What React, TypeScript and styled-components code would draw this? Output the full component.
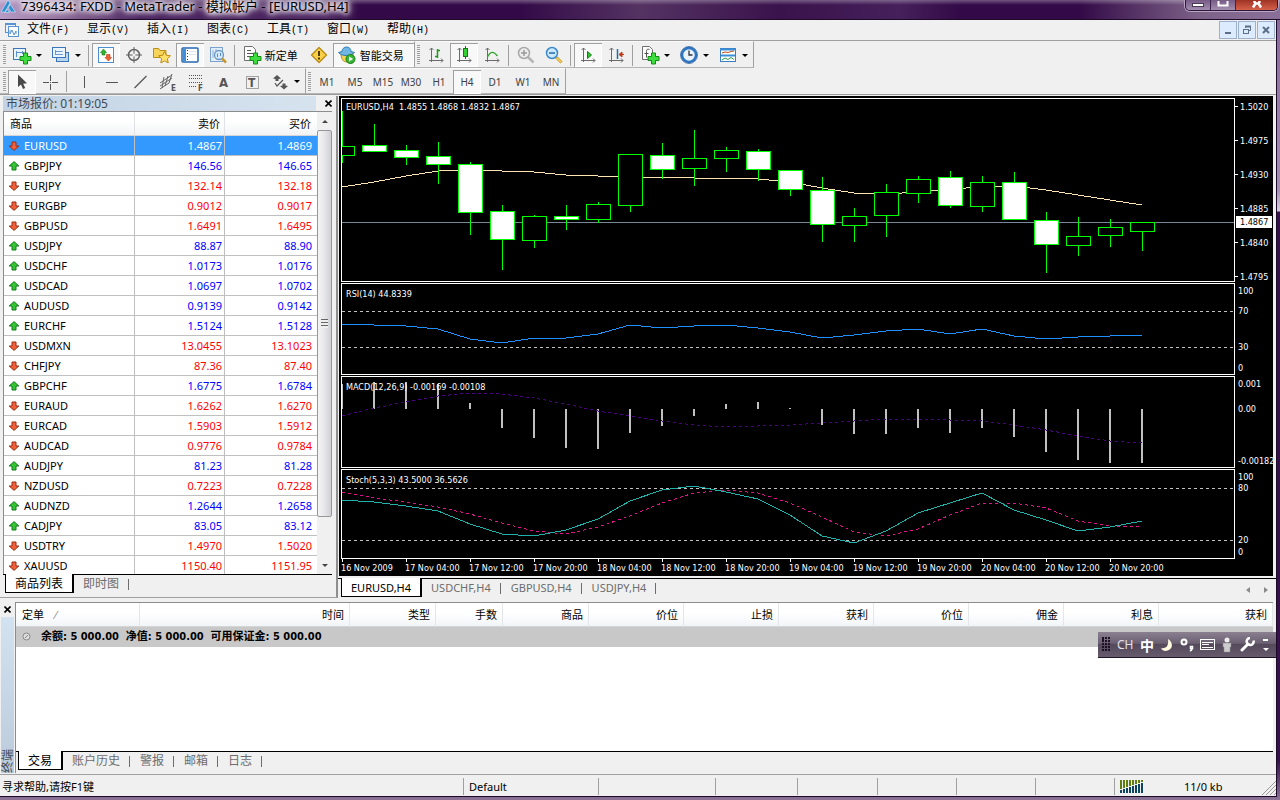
import React from "react";
import styled, { createGlobalStyle, css } from "styled-components";

const ui = '"Noto Sans", "Noto Sans CJK SC", sans-serif';
const condensed = '"DejaVu Sans Condensed", "Noto Sans", "Noto Sans CJK SC", sans-serif';
const mono = '"Liberation Mono", "Noto Sans CJK SC", monospace';

const Global = createGlobalStyle`
  * { box-sizing: border-box; }
  body { margin: 0; background: #35104a; font-family: ${ui}; font-size: 11px; color: #000; }
  button { font: inherit; color: inherit; background: none; border: 0; padding: 0; margin: 0; }
  table { border-collapse: separate; border-spacing: 0; }
`;

/* ---------- window frame ---------- */

const Frame = styled.div`
  display: flex;
  flex-direction: column;
  min-height: 100vh;
  padding: 0 3px 3px 0;
  background: linear-gradient(#85659a 0, #a58fb4 190px, #d8d0de 211px, #35104a 212px, #35104a 760px, #8b7497 100%);
`;

const TitleBar = styled.header`
  display: flex;
  align-items: flex-start;
  height: 20px;
  margin-right: -3px;
  border-bottom: 1px solid #1d0a28;
  background:
    linear-gradient(rgba(255, 255, 255, 0.3), rgba(255, 255, 255, 0) 5px),
    linear-gradient(90deg, #b79cc6 0, #96749f 55px, #4b2560 140px, #4b2560 330px, #330a47 360px, #330a47 520px, #543363 640px, #3a124c 780px, #45205a 900px, #330a47 960px, #330a47 1080px, #7d6288 1200px, #8a6f98 100%);
`;

const TitleIcon = styled.svg`
  flex: none;
  margin: 0 5px 0 1px;
`;

const TitleText = styled.h1`
  flex: 1;
  margin: 0;
  padding-right: 8px;
  font-size: 13px;
  line-height: 13px;
  font-weight: 400;
  white-space: nowrap;
  text-shadow: 0 0 5px #fff, 0 0 6px #fff, 0 0 8px #fff, 0 0 10px #fff, 0 0 4px #e9dff0;
`;

const Caption = styled.div`
  display: flex;
  height: 11px;
  margin-right: 2px;
  border: 1px solid #2b1738;
  border-top: 0;
  border-radius: 0 0 5px 5px;
  overflow: hidden;
  box-shadow: 0 0 0 1px #b9a6c4;
`;

const CaptionButton = styled.button<{ $close?: boolean }>`
  width: ${(p) => (p.$close ? 41 : 25)}px;
  height: 10px;
  overflow: hidden;
  border-right: ${(p) => (p.$close ? "0" : "1px solid #3c2450")};
  background: ${(p) => (p.$close ? "linear-gradient(#9e3325, #d6614a)" : "linear-gradient(#765b84, #a38db0)")};
  svg { display: block; margin: 0 auto; }
`;

const Client = styled.div`
  flex: 1;
  display: flex;
  flex-direction: column;
  border-right: 1px solid #1d0a28;
  border-bottom: 1px solid #1d0a28;
  background: #f0f0f0;
`;

/* ---------- menu ---------- */

const MenuBar = styled.nav`
  display: flex;
  align-items: center;
  height: 21px;
  padding: 0 1px 0 4px;
  border-bottom: 1px solid #a0a0a0;
`;

const MenuItem = styled.button`
  width: 60px;
  text-align: left;
  white-space: nowrap;
  font-size: 12px;
  line-height: 18px;
  &:first-of-type { margin-left: 7px; }
  span { font-family: ${mono}; font-size: 10px; }
`;

const MdiButtons = styled.div`
  display: flex;
  gap: 1px;
  margin-left: auto;
`;

const MdiButton = styled.button`
  width: 18px;
  height: 18px;
  border: 1px solid #9db1cc;
  background: #dcebfd;
  svg { display: block; }
`;

/* ---------- toolbars ---------- */

const ToolRow = styled.div`
  display: flex;
  height: 27px;
  &:last-of-type { border-bottom: 1px solid #9a9a9a; }
`;

const ToolGroup = styled.div`
  display: flex;
  align-items: center;
  padding-top: 1px;
  border-right: 1px solid #a0a0a0;
  border-bottom: 1px solid #b4b4b4;
  border-top: 1px solid #fafafa;
  &:first-child { padding-left: 1px; }
`;

const Grip = styled.span`
  width: 3px;
  height: 20px;
  margin: 0 2px 0 2px;
  background: repeating-linear-gradient(#a0a0a0 0 1px, #f0f0f0 1px 2px);
`;

const Sep = styled.span`
  width: 1px;
  height: 21px;
  margin: 0 3px 0 2px;
  background: #a0a0a0;
`;

const ToolButton = styled.button<{ $w?: number; $on?: boolean }>`
  display: flex;
  align-items: center;
  justify-content: ${(p) => (p.$w ? "flex-start" : "center")};
  width: ${(p) => p.$w ?? 28}px;
  height: 24px;
  padding-left: ${(p) => (p.$w ? 4 : 0)}px;
  font-size: 11px;
  white-space: nowrap;
  svg { flex: none; }
  ${(p) =>
    p.$on &&
    css`
      box-shadow: inset 1px 0 #a0a0a0, inset 0 1px #a0a0a0, inset -1px -1px #fff;
      background: #f8f8f8;
    `}
`;

const Period = styled(ToolButton)`
  font-size: 10px;
  color: #404040;
`;

const Caret = styled.i`
  margin-left: 4px;
  border: 3px solid transparent;
  border-top-color: #000;
  border-bottom: 0;
`;

const Glyph = styled.text<{ $size: number }>`
  font-family: ${condensed};
  font-size: ${(p) => p.$size}px;
  font-weight: 700;
  fill: #555;
`;

const Ico = ({ children }: { children: React.ReactNode }) => (
  <svg width="20" height="20" viewBox="0 0 20 20" fill="none" aria-hidden="true">
    {children}
  </svg>
);

const Plus = () => (
  <path d="M11.500 8h4v3.500h3.500v4h-3.500V19h-4v-3.500H8v-4h3.500z" fill="#3fdc3f" stroke="#128a18" />
);
const Axes = () => (
  <path d="M5.500 3v14M3 15.500h14M3.500 5l2-2 2 2M15 13.500l2 2-2 2" stroke="#6b6b6b" />
);
const ink = "#555";

const icons = {
  newChart: (
    <Ico>
      <rect x="1.500" y="3.500" width="12" height="11" fill="#e9f3fd" stroke="#3d76b8" />
      <path d="M4.500 6v6M4.500 7.500h7M10 6l1.500 1.500L10 9" stroke="#5b8fc9" />
      <Plus />
    </Ico>
  ),
  profiles: (
    <Ico>
      <rect x="5.500" y="7.500" width="12" height="9" fill="#b9d5f0" stroke="#3d76b8" />
      <rect x="1.500" y="2.500" width="13" height="10" fill="#eaf4fd" stroke="#3d76b8" />
      <path d="M4.500 5v5M4.500 6.500h7M4 9.500h8" stroke="#6a9bd0" />
    </Ico>
  ),
  marketWatch: (
    <Ico>
      <rect x="2.500" y="2.500" width="15" height="15" fill="#fff" stroke="#4c8fce" />
      <path d="M7.500 4l3 3.500h-1.500V10H6V7.500H4.500z" fill="#2fb52f" stroke="#16801a" strokeWidth=".6" />
      <path d="M12.500 16l-3.500-3.500h1.500V9.500h3.500v3h1.500z" fill="#ef6230" stroke="#b8350e" strokeWidth=".6" />
    </Ico>
  ),
  dataWindow: (
    <Ico>
      <circle cx="10" cy="10" r="5.500" stroke="#636363" strokeWidth="1.500" />
      <path d="M10 2v16M2 10h16" stroke="#636363" />
      <circle cx="10" cy="10" r="1.500" fill="#f0f0f0" />
    </Ico>
  ),
  navigator: (
    <Ico>
      <path d="M1.500 3.500h5l1.500 2h6v7h-12.500z" fill="#f7d55c" stroke="#b98e18" />
      <path d="M12.500 6.500l1.800 3.800 4.200.5-3.100 2.900.8 4.200-3.700-2.100-3.700 2.100.8-4.200-3.100-2.900 4.200-.5z" fill="#ffe169" stroke="#c08a10" />
    </Ico>
  ),
  terminal: (
    <Ico>
      <rect x="2" y="3" width="16" height="14" rx="1" fill="#fff" stroke="#2568b0" strokeWidth="1.500" />
      <rect x="3" y="4" width="3" height="12" fill="#3f8fe0" />
      <path d="M9 6.500h7M9 9.500h7" stroke="#e0e6ef" />
      <path d="M7.500 5v10" stroke="#333" strokeDasharray="1 2" />
    </Ico>
  ),
  tester: (
    <Ico>
      <rect x="2.500" y="2.500" width="12" height="14" fill="#e4eefa" stroke="#7aa2cd" />
      <path d="M5 5v8M8 4v3" stroke="#8aaed6" />
      <circle cx="11" cy="10" r="4.500" fill="#d2e9fa" fillOpacity=".85" stroke="#6a98c4" strokeWidth="1.300" />
      <path d="M14 13.500l4 4" stroke="#c8962a" strokeWidth="2.500" />
      <path d="M9.500 12V8.500M12.500 11V8" stroke="#5a8abf" />
    </Ico>
  ),
  order: (
    <Ico>
      <path d="M2.500 1.500h8l3 3v11h-11z" fill="#fdfdfd" stroke="#6f6f6f" />
      <path d="M5 5.500h4M5 8.500h6M5 11.500h4" stroke="#555" />
      <Plus />
    </Ico>
  ),
  editor: (
    <Ico>
      <path d="M10 2.500l7.500 7.500-7.500 7.500L2.500 10z" fill="#f8cf45" stroke="#b98b14" strokeLinejoin="round" strokeWidth="1.300" />
      <path d="M10 6v5" stroke="#4d3a05" strokeWidth="2" />
      <path d="M10 12.500v2" stroke="#4d3a05" strokeWidth="2" />
    </Ico>
  ),
  experts: (
    <Ico>
      <path d="M4 8c0 6 2 9 6 9s6-3 6-8z" fill="#f3d25a" stroke="#b58e1d" />
      <path d="M1.500 7.500c3 4 12 4 16 0l-3.500-1c0-3-2-4.500-4.500-4.500S5 4 5 6.500z" fill="#6fb6e4" stroke="#2f7cb3" />
      <circle cx="13.500" cy="14" r="4.500" fill="#36b436" stroke="#168018" />
      <path d="M12 11.500v5l4-2.500z" fill="#fff" />
    </Ico>
  ),
  bars: (
    <Ico>
      <Axes />
      <path d="M11.500 4v9M9 11.500h2.500M11.500 5.500H14" stroke="#1c9a1c" strokeWidth="1.500" />
    </Ico>
  ),
  candles: (
    <Ico>
      <Axes />
      <path d="M11.500 1v13" stroke="#157a15" />
      <rect x="9.500" y="3.500" width="4" height="8" fill="#36d036" stroke="#157a15" />
    </Ico>
  ),
  line: (
    <Ico>
      <Axes />
      <path d="M5.500 12c3-6 6-6 10-1" stroke="#2aa52a" strokeWidth="1.300" />
    </Ico>
  ),
  zoomIn: (
    <Ico>
      <path d="M12 12l5.500 5.500" stroke="#b5b5b5" strokeWidth="2.500" />
      <circle cx="8" cy="8" r="5.500" fill="#ececec" stroke="#a8a8a8" strokeWidth="1.500" />
      <path d="M5 8h6M8 5v6" stroke="#999" strokeWidth="1.500" />
    </Ico>
  ),
  zoomOut: (
    <Ico>
      <path d="M12 12l5.500 5.500" stroke="#c79a2c" strokeWidth="3" />
      <path d="M12.500 12.500l4.500 4.500" stroke="#f6dc6b" strokeWidth="1.200" />
      <circle cx="8" cy="8" r="5.500" fill="#cde8fb" stroke="#3b88c9" strokeWidth="1.500" />
      <path d="M5 8h6" stroke="#1f6bb0" strokeWidth="1.500" />
    </Ico>
  ),
  autoScroll: (
    <Ico>
      <Axes />
      <path d="M9.500 6.500v7l4-3.500z" fill="#2fc22f" stroke="#168018" />
    </Ico>
  ),
  shift: (
    <Ico>
      <Axes />
      <path d="M11.500 4v10" stroke="#1a6fa8" strokeWidth="1.500" />
      <path d="M18 9.500h-4M16 7l-3 2.500 3 2.500z" stroke="#c23a12" fill="#c23a12" />
    </Ico>
  ),
  indicators: (
    <Ico>
      <path d="M2.500 1.500h7l3 3v10h-10z" fill="#fdfdfd" stroke="#6f6f6f" />
      <path d="M9.500 4.500c-2-1-3 0-3 2v6M4.500 8.500h4" stroke="#555" />
      <Plus />
    </Ico>
  ),
  periods: (
    <Ico>
      <circle cx="10" cy="10" r="7" fill="#e8f3fd" stroke="#2c74c4" strokeWidth="2.500" />
      <circle cx="10" cy="10" r="8.500" stroke="#174f92" strokeWidth=".7" />
      <path d="M10 5.500V10h3.500" stroke="#333" strokeWidth="1.300" />
    </Ico>
  ),
  templates: (
    <Ico>
      <rect x="2.500" y="3.500" width="15" height="13" fill="#fff" stroke="#3a7fc4" />
      <path d="M2 4.500h16M3 10.500h14" stroke="#3a8fd8" strokeWidth="2" />
      <path d="M4 8l3-1 3 .5 3-1 3-.5" stroke="#c05018" />
      <path d="M4 15l3-2 3 1.500 3-2 3 2" stroke="#2b9a4a" />
    </Ico>
  ),
  pointer: (
    <Ico>
      <path d="M6 2.500v12.500l3-2.500 2 4.500 2.200-1-2-4.300 3.800-.4z" fill="#4a4a4a" />
    </Ico>
  ),
  cross: (
    <Ico>
      <path d="M10.500 3v6M10.500 12v6M3 10.500h6M12 10.500h6M10 10.500h1" stroke={ink} />
    </Ico>
  ),
  vline: (
    <Ico>
      <path d="M10.500 4v12" stroke={ink} />
    </Ico>
  ),
  hline: (
    <Ico>
      <path d="M4 10.500h12" stroke={ink} />
    </Ico>
  ),
  trend: (
    <Ico>
      <path d="M4.500 16l12-12" stroke={ink} strokeWidth="1.300" />
    </Ico>
  ),
  channel: (
    <Ico>
      <path d="M2 11l12-8M2 14l12-8M2 17l9-6M6 5L4 16M10 4L7 14M14 2l-3 9" stroke="#666" />
      <Glyph $size={8} x="13" y="19">E</Glyph>
    </Ico>
  ),
  fibo: (
    <Ico>
      <path d="M3 3.500h14M3 6.500h14M3 10.500h14M3 14.500h8" stroke="#555" strokeDasharray="1 1" />
      <Glyph $size={8} x="12" y="19">F</Glyph>
    </Ico>
  ),
  text: (
    <Ico>
      <Glyph $size={13} x="5" y="15">A</Glyph>
    </Ico>
  ),
  label: (
    <Ico>
      <rect x="4.500" y="4.500" width="12" height="12" stroke="#555" strokeDasharray="1 1" />
      <Glyph $size={12} x="6" y="15">T</Glyph>
    </Ico>
  ),
  arrows: (
    <Ico>
      <path d="M7 3l4 3.500-2.500.5v2h-3V7L3 6.500z" fill="#555" />
      <path d="M14 17.500l-4-3.500 2.500-.5v-2h3v2l2.500.5z" fill="#555" />
      <path d="M5 11l2 3 6-6" stroke="#555" strokeWidth="1.200" />
    </Ico>
  ),
};

/* ---------- market watch ---------- */

const Workspace = styled.main`
  display: flex;
  margin-top: 1px;
`;

const Watch = styled.section`
  display: flex;
  flex-direction: column;
  flex: none;
  width: 338px;
  padding: 0 4px 4px 3px;
  border-right: 2px solid #8e8e8e;
  border-bottom: 1px solid #a0a0a0;
`;

const PaneTitle = styled.div`
  display: flex;
  gap: 5px;
  height: 15px;
  margin-right: -4px;
  h2 {
    flex: 1;
    margin: 0;
    padding-left: 3px;
    font-size: 12px;
    line-height: 15px;
    font-weight: 400;
    color: #3c4a58;
    background: linear-gradient(90deg, #c3d3e4, #d6e3ef);
  }
`;

const CloseButton = styled.button`
  display: flex;
  align-items: center;
  justify-content: center;
  width: 15px;
  height: 15px;
`;

const CloseMark = () => (
  <svg width="7" height="7" viewBox="0 0 7 7" aria-hidden="true">
    <path d="M0.500 .5l6 6M6.500 .5l-6 6" stroke="#000" strokeWidth="1.600" />
  </svg>
);

const List = styled.div`
  display: flex;
  flex: 1 1 auto;
  height: 0;
  overflow: hidden;
  border-top: 1px solid #8c8c8c;
  border-left: 1px solid #8c8c8c;
`;

const Quotes = styled.table`
  flex: 1;
  table-layout: fixed;
  align-self: flex-start;
  background: #fff;
  font-size: 11px;
  line-height: 18px;
  th {
    height: 24px;
    padding: 0 4px 0 6px;
    font-weight: 400;
    text-align: right;
    background: linear-gradient(#fff 40%, #f1f3f5);
    border-bottom: 1px solid #d5d5d5;
    border-right: 1px solid #e0e3e6;
  }
  th:first-child { text-align: left; }
  thead th:last-child { padding-right: 6px; }
  td, tbody th {
    height: 20px;
    padding: 0 2px;
    text-align: right;
    border-right: 1px solid #c0c0c0;
    border-bottom: 1px solid #c0c0c0;
    background: none;
  }
  td:last-child { padding-right: 5px; }
  td:last-child, th:last-child { border-right: 0; }
  tbody th { text-align: left; padding-left: 4px; }
  tbody th svg { margin-right: 4px; vertical-align: -1px; }
`;

const Quote = styled.tr<{ $up: boolean; $on: boolean }>`
  background: ${(p) => (p.$on ? "#3399ff" : "#fff")};
  td { color: ${(p) => (p.$on ? "#fff" : p.$up ? "#0000ff" : "#ff0000")}; }
  th { color: ${(p) => (p.$on ? "#fff" : "#000")}; }
`;

const ScrollBar = styled.div`
  display: flex;
  flex-direction: column;
  width: 15px;
  background: #f0f0f0;
`;

const ScrollButton = styled.button<{ $down?: boolean }>`
  display: flex;
  align-items: center;
  justify-content: center;
  height: 18px;
  i {
    border: 3px solid transparent;
    ${(p) => (p.$down ? "border-top-color: #444; border-bottom: 0;" : "border-bottom-color: #444; border-top: 0;")}
  }
`;

const Thumb = styled.div`
  display: flex;
  align-items: center;
  justify-content: center;
  flex: 10;
  border: 1px solid #979797;
  border-radius: 2px;
  background: linear-gradient(90deg, #f5f5f5, #e6e6e9 50%, #cfd0d4);
  i { width: 7px; height: 9px; background: repeating-linear-gradient(#666 0 1px, #eee 1px 3px); }
`;

const Track = styled.div`
  flex: 1;
`;

const Arrow = ({ up }: { up: boolean }) => (
  <svg width="12" height="10" viewBox="0 0 12 10" aria-label={up ? "up" : "down"}>
    {up ? (
      <path d="M6 .6l4.800 4.400H8v4H4V5H1.200z" fill="#35c435" stroke="#137a1b" />
    ) : (
      <path d="M6 9.400L1.200 5H4V1h4v4h2.800z" fill="#f0603a" stroke="#9a2b10" />
    )}
  </svg>
);

const quotes: [string, string, string, boolean][] = [
  ["EURUSD", "1.4867", "1.4869", false],
  ["GBPJPY", "146.56", "146.65", true],
  ["EURJPY", "132.14", "132.18", false],
  ["EURGBP", "0.9012", "0.9017", false],
  ["GBPUSD", "1.6491", "1.6495", false],
  ["USDJPY", "88.87", "88.90", true],
  ["USDCHF", "1.0173", "1.0176", true],
  ["USDCAD", "1.0697", "1.0702", true],
  ["AUDUSD", "0.9139", "0.9142", true],
  ["EURCHF", "1.5124", "1.5128", true],
  ["USDMXN", "13.0455", "13.1023", false],
  ["CHFJPY", "87.36", "87.40", false],
  ["GBPCHF", "1.6775", "1.6784", true],
  ["EURAUD", "1.6262", "1.6270", false],
  ["EURCAD", "1.5903", "1.5912", false],
  ["AUDCAD", "0.9776", "0.9784", false],
  ["AUDJPY", "81.23", "81.28", true],
  ["NZDUSD", "0.7223", "0.7228", false],
  ["AUDNZD", "1.2644", "1.2658", true],
  ["CADJPY", "83.05", "83.12", true],
  ["USDTRY", "1.4970", "1.5020", false],
  ["XAUUSD", "1150.40", "1151.95", false],
];

/* ---------- tabs ---------- */

const Tabs = styled.div<{ $small?: boolean }>`
  display: flex;
  align-items: flex-start;
  height: 19px;
  padding-left: ${(p) => (p.$small ? 3 : 2)}px;
  border-top: 1px solid #000;
  font-size: ${(p) => (p.$small ? 11 : 12)}px;
`;

const Tab = styled.button<{ $on?: boolean }>`
  height: 18px;
  margin-top: -1px;
  padding: 0 10px 0 9px;
  line-height: 17px;
  white-space: nowrap;
  color: #6d6d6d;
  border-right: 1px solid transparent;
  ${(p) =>
    p.$on
      ? css`
          height: 19px;
          padding: 0 9px;
          color: #000;
          background: #fff;
          border: 1px solid #000;
          border-top: 0;
          border-right-width: 2px;
        `
      : css`
          background: linear-gradient(#6d6d6d, #6d6d6d) right 5px / 1px 11px no-repeat;
        `}
`;

const TabArrows = styled.div`
  display: flex;
  gap: 4px;
  margin: 0 3px 0 auto;
  button { width: 14px; height: 18px; }
`;

/* ---------- charts ---------- */

const ChartPane = styled.section`
  flex: 1;
  min-width: 0;
  display: flex;
  flex-direction: column;
  padding-bottom: 1px;
`;

const ChartWindow = styled.div`
  display: flex;
  flex-direction: column;
  gap: 1px;
  margin: 0 3px 2px 1px;
  padding: 2px 0 0 2px;
  background: #000;
`;

const Panel = styled.div<{ $h: number }>`
  display: grid;
  grid-template-columns: minmax(0, 1fr) 38px;
  height: ${(p) => p.$h}px;
`;

const Plot = styled.div`
  border: 1px solid #fff;
  overflow: hidden;
`;

const Drawing = styled.svg`
  display: block;
  width: 100%;
  height: 100%;
  shape-rendering: crispEdges;
  text { font-family: ${condensed}; font-size: 9px; fill: #fff; }
  path { fill: none; }
`;

const PriceTag = styled.g`
  rect { fill: #fff; }
  text { fill: #000; }
`;

const TimeAxis = styled.div`
  height: 17px;
  margin-top: -1px;
`;

const STEP = 32;

type Candle = [number, number, number, number, 0 | 1];
/* high, body top, body bottom, low, filled (bearish) */
const candles: Candle[] = [
  [12, 47, 56, 63, 0],
  [25, 46, 52, 52, 1],
  [46, 51, 58, 65, 1],
  [43, 57, 65, 84, 1],
  [63, 65, 113, 135, 1],
  [106, 112, 140, 170, 1],
  [116, 117, 141, 148, 0],
  [106, 117, 120, 130, 1],
  [103, 105, 120, 123, 0],
  [55, 55, 106, 112, 0],
  [44, 56, 70, 79, 1],
  [31, 59, 69, 86, 0],
  [48, 51, 59, 72, 0],
  [50, 52, 70, 81, 1],
  [71, 71, 90, 96, 1],
  [78, 91, 125, 142, 1],
  [109, 117, 126, 142, 0],
  [85, 93, 116, 137, 0],
  [77, 80, 94, 103, 0],
  [72, 78, 106, 108, 1],
  [77, 83, 107, 112, 0],
  [73, 83, 120, 120, 1],
  [113, 121, 145, 173, 1],
  [118, 137, 146, 156, 0],
  [120, 128, 136, 147, 0],
  [123, 123, 132, 151, 0],
];

const average = [88, 83, 77, 72, 71, 72, 73, 76, 77, 78, 78, 79, 79, 80, 83, 89, 94, 95, 93, 90, 88, 87, 91, 96, 101, 106];
const rsi = [40, 41, 42, 45, 55, 59, 54, 54, 50, 41, 44, 42, 41, 44, 48, 54, 51, 47, 45, 50, 45, 52, 55, 53, 52, 51];
const macd = [7, 5, 5, 7, 26, 51, 61, 71, 72, 56, 49, 39, 27, 25, 31, 48, 57, 57, 51, 56, 51, 60, 75, 83, 86, 86];
const macdSignal = [39, 31, 25, 19, 16, 17, 21, 27, 34, 39, 44, 48, 50, 49, 48, 46, 44, 42, 42, 43, 44, 48, 53, 59, 64, 66];
const stoch = [30, 32, 36, 41, 54, 64, 66, 60, 49, 31, 20, 16, 22, 29, 45, 66, 73, 61, 43, 33, 23, 40, 50, 61, 57, 51];
const stochSignal = [22, 28, 32, 37, 44, 53, 61, 64, 57, 46, 33, 23, 20, 23, 33, 47, 62, 66, 59, 45, 33, 33, 38, 51, 56, 57];
const prices: [number, string][] = [
  [8, "1.5020"], [42, "1.4975"], [76, "1.4930"], [110, "1.4885"], [144, "1.4840"], [178, "1.4795"],
];

const toPath = (ys: number[]) => ys.map((y, i) => `${i ? "L" : "M"}${i * STEP} ${y}`).join("");

const Level = ({ y }: { y: number }) => (
  <line x1="0" x2="100%" y1={y + 0.5} y2={y + 0.5} stroke="#c0c0c0" strokeDasharray="3 3" />
);

const Scale = ({ marks }: { marks: [number, string][] }) => (
  <Drawing>
    {marks.map(([y, t]) => (
      <text key={t} x="3" y={y + 3}>{t}</text>
    ))}
  </Drawing>
);

const times = [
  "16 Nov 2009", "17 Nov 04:00", "17 Nov 12:00", "17 Nov 20:00", "18 Nov 04:00", "18 Nov 12:00", "18 Nov 20:00",
  "19 Nov 04:00", "19 Nov 12:00", "19 Nov 20:00", "20 Nov 04:00", "20 Nov 12:00", "20 Nov 20:00",
];

const Charts = () => (
  <ChartWindow>
    <Panel $h={184}>
      <Plot>
        <Drawing>
          <line x1="0" x2="100%" y1="123.500" y2="123.500" stroke="#778899" />
          <path d={toPath(average)} stroke="#ffe4b5" />
          {candles.map(([hi, top, bottom, lo, filled], i) => (
            <g key={i} stroke="#00ff00">
              <line x1={i * STEP + 0.5} x2={i * STEP + 0.5} y1={hi} y2={lo + 1} />
              <rect
                x={i * STEP - 11.5}
                y={top + 0.5}
                width="24"
                height={bottom - top}
                fill={filled ? "#fff" : "#000"}
              />
            </g>
          ))}
          <text x="4" y="11" xmlSpace="preserve">EURUSD,H4  1.4855 1.4868 1.4832 1.4867</text>
        </Drawing>
      </Plot>
      <Drawing>
        {prices.map(([y, t]) => (
          <g key={t}>
            <line x1="0" x2="3" y1={y + 0.5} y2={y + 0.5} stroke="#fff" />
            <text x="5" y={y + 4}>{t}</text>
          </g>
        ))}
        <PriceTag>
          <rect x="1" y="118" width="36" height="12" />
          <text x="5" y="127">1.4867</text>
        </PriceTag>
      </Drawing>
    </Panel>
    <Panel $h={92}>
      <Plot>
        <Drawing>
          <Level y={27} />
          <Level y={63} />
          <path d={toPath(rsi)} stroke="#1e90ff" />
          <text x="4" y="13">RSI(14) 44.8339</text>
        </Drawing>
      </Plot>
      <Scale marks={[[8, "100"], [28, "70"], [64, "30"], [85, "0"]]} />
    </Panel>
    <Panel $h={92}>
      <Plot>
        <Drawing>
          {macd.map((y, i) => (
            <rect key={i} x={i * STEP - 1} y={Math.min(y, 32)} width="2" height={Math.abs(y - 32)} fill="#c0c0c0" />
          ))}
          <path d={toPath(macdSignal)} stroke="#4b0082" strokeDasharray="3 3" />
          <text x="4" y="13">MACD(12,26,9) -0.00169 -0.00108</text>
        </Drawing>
      </Plot>
      <Scale marks={[[8, "0.001"], [33, "0.00"], [85, "-0.00182"]]} />
    </Panel>
    <Panel $h={90}>
      <Plot>
        <Drawing>
          <Level y={18} />
          <Level y={70} />
          <path d={toPath(stochSignal)} stroke="#e0148a" strokeDasharray="3 3" />
          <path d={toPath(stoch)} stroke="#20b2aa" />
          <text x="4" y="13">Stoch(5,3,3) 43.5000 36.5626</text>
        </Drawing>
      </Plot>
      <Scale marks={[[8, "100"], [19, "80"], [71, "20"], [83, "0"]]} />
    </Panel>
    <TimeAxis>
      <Drawing>
        {times.map((t, i) => (
          <g key={t}>
            <line x1={i * 64 + 1.5} x2={i * 64 + 1.5} y1="0" y2="3" stroke="#fff" />
            <text x={i * 64} y="12">{t}</text>
          </g>
        ))}
      </Drawing>
    </TimeAxis>
  </ChartWindow>
);

/* ---------- terminal ---------- */

const Terminal = styled.section`
  position: relative;
  flex: 1;
  display: grid;
  grid-template-columns: 15px minmax(0, 1fr);
  padding: 4px 3px 1px 0;
  border-bottom: 1px solid #a0a0a0;
`;

const Side = styled.div`
  display: flex;
  flex-direction: column;
  h2 {
    flex: 1;
    margin: 0 1px 0 1px;
    font-size: 12px;
    line-height: 13px;
    font-weight: 400;
    color: #3c4a58;
    writing-mode: vertical-rl;
    text-orientation: sideways;
    transform: rotate(180deg);
    background: linear-gradient(#bccbdb, #d3e2f1);
  }
`;

const Trade = styled.div`
  display: flex;
  flex-direction: column;
  min-width: 0;
  padding-bottom: 3px;
  border-left: 1px solid #8c8c8c;
  border-top: 1px solid #8c8c8c;
`;

const Sheet = styled.div`
  flex: 1;
  background: #fff;
`;

const Orders = styled.table`
  width: 100%;
  table-layout: fixed;
  font-size: 11px;
  line-height: 18px;
  th {
    height: 24px;
    padding: 0 5px 0 6px;
    font-weight: 400;
    text-align: right;
    background: linear-gradient(#fff 40%, #f2f5f8);
    border-right: 1px solid #e4e7ea;
    border-bottom: 1px solid #d5d5d5;
  }
  th:first-child { text-align: left; }
  th:first-child span { padding-left: 8px; color: #888; }
  td {
    height: 20px;
    padding: 0 6px;
    font-family: ${condensed};
    font-weight: 700;
    background: #c8c8c8;
    white-space: pre;
  }
  td svg { margin-right: 10px; vertical-align: -1px; }
`;

const LangBar = styled.div`
  position: absolute;
  top: 34px;
  right: 0;
  display: flex;
  align-items: center;
  width: 178px;
  height: 26px;
  padding: 0 7px 0 19px;
  color: #fff;
  border-bottom: 1px solid #1e1526;
  background:
    radial-gradient(circle at 1px 1px, #1c1024 1px, transparent 1px) 4px 6px / 3px 3px no-repeat,
    linear-gradient(#8a8090, #6b6072 45%, #544a5c 50%, #665a6c);
  button { display: flex; align-items: center; justify-content: center; width: 20px; height: 22px; font-size: 14px; }
  button:last-child { width: 7px; margin-left: auto; }
`;

const DragDots = styled.span`
  width: 9px;
  height: 15px;
  margin: 0 6px 0 -15px;
  background: radial-gradient(circle at 1px 1px, #1c1024 1px, transparent 1px) 0 0 / 3px 3px;
`;

const LangName = styled.span`
  width: 20px;
  font-size: 12px;
  color: #e6e0e8;
`;

/* ---------- status ---------- */

const Status = styled.footer`
  display: flex;
  align-items: stretch;
  height: 21px;
  padding: 3px 0 1px;
  line-height: 17px;
`;

const Cell = styled.div<{ $w?: number }>`
  display: flex;
  align-items: center;
  flex: ${(p) => (p.$w ? `${p.$w} 1 ${p.$w}px` : "none")};
  min-width: 0;
  padding-left: 5px;
  white-space: nowrap;
  border-left: 1px solid #a0a0a0;
  &:first-child { padding-left: 2px; border-left: 0; }
`;

const Traffic = styled(Cell)`
  width: 162px;
  span { margin-left: 40px; }
  svg:last-child { margin-left: auto; align-self: flex-end; }
`;

const menus = [["文件", "F"], ["显示", "V"], ["插入", "I"], ["图表", "C"], ["工具", "T"], ["窗口", "W"], ["帮助", "H"]];
const periods = ["M1", "M5", "M15", "M30", "H1", "H4", "D1", "W1", "MN"];
const orderColumns: [string, number | undefined][] = [
  ["时间", 210], ["类型", 86], ["手数", 67], ["商品", 86], ["价位", 95], ["止损", 95], ["获利", 95], ["价位", 95],
  ["佣金", 95], ["利息", 95], ["获利", undefined],
];

const Tool = ({ icon, label, on }: { icon: keyof typeof icons; label: string; on?: boolean }) => (
  <ToolButton $on={on} aria-label={label}>{icons[icon]}</ToolButton>
);
const DropTool = ({ icon, label }: { icon: keyof typeof icons; label: string }) => (
  <ToolButton $w={39} aria-label={label}>{icons[icon]}<Caret /></ToolButton>
);

export default function App() {
  return (
    <Frame>
      <Global />
      <TitleBar>
        <TitleIcon width="15" height="14" viewBox="0 0 15 14" aria-hidden="true">
          <path d="M7 0L0 12h4L9 3zM9 4l5.500 8H10L7.500 8zM6 9l2.500 3.500H4z" fill="#2b8fd0" stroke="#d8ecf8" strokeWidth=".6" />
        </TitleIcon>
        <TitleText>7396434: FXDD - MetaTrader - 模拟帐户 - [EURUSD,H4]</TitleText>
        <Caption>
          <CaptionButton aria-label="最小化">
            <svg width="14" height="9"><rect x="1.500" y="2.500" width="11" height="3" fill="#fff" stroke="#4a3a55" /></svg>
          </CaptionButton>
          <CaptionButton aria-label="最大化">
            <svg width="14" height="9"><path d="M2.500 0v4.500h9V0" fill="none" stroke="#fff" strokeWidth="2" /></svg>
          </CaptionButton>
          <CaptionButton $close aria-label="关闭">
            <svg width="14" height="9"><path d="M3 6.500L5.500 2.500 4 0M11 6.500L8.500 2.500 10 0M5.500 2.500h3" fill="none" stroke="#fff" strokeWidth="2.500" /></svg>
          </CaptionButton>
        </Caption>
      </TitleBar>
      <Client>
        <MenuBar>
          <svg width="16" height="16" viewBox="0 0 16 16" fill="none" aria-hidden="true">
            <rect x="1.500" y="1.500" width="10" height="9" fill="#eaf3fc" stroke="#5a94d0" />
            <rect x="4.500" y="4.500" width="10" height="10" fill="#fff" stroke="#5a94d0" />
            <path d="M1 2h11" stroke="#5a94d0" strokeWidth="2" />
            <path d="M6 8v4l2-4 2 5 2-4v3" stroke="#5a94d0" />
          </svg>
          {menus.map(([name, key]) => (
            <MenuItem key={key}>{name}<span>({key})</span></MenuItem>
          ))}
          <MdiButtons>
            <MdiButton aria-label="最小化图表">
              <svg width="16" height="16"><path d="M5 11h6" stroke="#5d6f87" strokeWidth="2" /></svg>
            </MdiButton>
            <MdiButton aria-label="还原图表">
              <svg width="16" height="16" fill="none"><path d="M6.500 6V4.500h5v4h-2" stroke="#5d6f87" /><rect x="4.500" y="7.500" width="5" height="4" stroke="#5d6f87" /><path d="M6 4.500h6" stroke="#5d6f87" strokeWidth="2" /></svg>
            </MdiButton>
            <MdiButton aria-label="关闭图表">
              <svg width="16" height="16"><path d="M5 5l6 6M11 5l-6 6" stroke="#5d6f87" strokeWidth="2" /></svg>
            </MdiButton>
          </MdiButtons>
        </MenuBar>
        <ToolRow>
          <ToolGroup>
            <Grip />
            <DropTool icon="newChart" label="新图表" />
            <DropTool icon="profiles" label="图表夹" />
            <Sep />
            <Tool icon="marketWatch" label="市场报价" on />
            <Tool icon="dataWindow" label="数据窗口" />
            <Tool icon="navigator" label="导航" />
            <Tool icon="terminal" label="终端" on />
            <Tool icon="tester" label="策略测试" />
            <Sep />
            <ToolButton $w={67}>{icons.order}<span>&nbsp;新定单</span></ToolButton>
            <Tool icon="editor" label="编辑器" />
            <ToolButton $w={81} $on>{icons.experts}<span>&nbsp;智能交易</span></ToolButton>
          </ToolGroup>
          <ToolGroup>
            <Grip />
            <Tool icon="bars" label="柱状图" />
            <Tool icon="candles" label="阴阳烛" on />
            <Tool icon="line" label="折线图" />
            <Sep />
            <Tool icon="zoomIn" label="放大" />
            <Tool icon="zoomOut" label="缩小" />
            <Sep />
            <Tool icon="autoScroll" label="自动滚动" on />
            <Tool icon="shift" label="图表平移" />
            <Sep />
            <DropTool icon="indicators" label="技术指标" />
            <DropTool icon="periods" label="时间周期" />
            <DropTool icon="templates" label="模板" />
          </ToolGroup>
        </ToolRow>
        <ToolRow>
          <ToolGroup>
            <Grip />
            <Tool icon="pointer" label="箭头" on />
            <Tool icon="cross" label="十字准线" />
            <Sep />
            <Tool icon="vline" label="垂直线" />
            <Tool icon="hline" label="水平线" />
            <Tool icon="trend" label="趋势线" />
            <Tool icon="channel" label="等距通道" />
            <Tool icon="fibo" label="斐波纳契" />
            <Tool icon="text" label="文字" />
            <Tool icon="label" label="文字标签" />
            <DropTool icon="arrows" label="箭头符号" />
          </ToolGroup>
          <ToolGroup>
            <Grip />
            {periods.map((p) => (
              <Period key={p} $on={p === "H4"}>{p}</Period>
            ))}
          </ToolGroup>
        </ToolRow>
        <Workspace>
          <Watch>
            <PaneTitle>
              <h2>市场报价: 01:19:05</h2>
              <CloseButton aria-label="关闭市场报价"><CloseMark /></CloseButton>
            </PaneTitle>
            <List>
              <Quotes>
                <colgroup>
                  <col />
                  <col style={{ width: 90 }} />
                  <col style={{ width: 92 }} />
                </colgroup>
                <thead>
                  <tr><th>商品</th><th>卖价</th><th>买价</th></tr>
                </thead>
                <tbody>
                  {quotes.map(([name, bid, ask, up], i) => (
                    <Quote key={name} $up={up} $on={i === 0}>
                      <th scope="row"><Arrow up={up} />{name}</th>
                      <td>{bid}</td>
                      <td>{ask}</td>
                    </Quote>
                  ))}
                </tbody>
              </Quotes>
              <ScrollBar>
                <ScrollButton aria-label="向上滚动"><i /></ScrollButton>
                <Thumb><i /></Thumb>
                <Track />
                <ScrollButton $down aria-label="向下滚动"><i /></ScrollButton>
              </ScrollBar>
            </List>
            <Tabs>
              <Tab $on>商品列表</Tab>
              <Tab>即时图</Tab>
            </Tabs>
          </Watch>
          <ChartPane>
            <Charts />
            <Tabs $small>
              <Tab $on>EURUSD,H4</Tab>
              <Tab>USDCHF,H4</Tab>
              <Tab>GBPUSD,H4</Tab>
              <Tab>USDJPY,H4</Tab>
              <TabArrows>
                <button aria-label="上一个"><svg width="4" height="6"><path d="M4 0v6L0 3z" fill="#8a8a8a" /></svg></button>
                <button aria-label="下一个"><svg width="4" height="6"><path d="M0 0v6l4-3z" fill="#8a8a8a" /></svg></button>
              </TabArrows>
            </Tabs>
          </ChartPane>
        </Workspace>
        <Terminal>
          <Side>
            <CloseButton aria-label="关闭终端"><CloseMark /></CloseButton>
            <h2>终端</h2>
          </Side>
          <Trade>
            <Sheet>
              <Orders>
                <colgroup>
                  <col style={{ width: 124 }} />
                  {orderColumns.map(([, w], i) => <col key={i} style={{ width: w }} />)}
                </colgroup>
                <thead>
                  <tr>
                    <th>定单 <span>⁄</span></th>
                    {orderColumns.map(([name], i) => <th key={i}>{name}</th>)}
                  </tr>
                </thead>
                <tbody>
                  <tr>
                    <td colSpan={12}>
                      <svg width="9" height="9" aria-hidden="true">
                        <circle cx="4.500" cy="4.500" r="3.500" fill="#ddd" stroke="#888" />
                        <path d="M3 6l3-3" stroke="#888" />
                      </svg>
                      余额: 5 000.00  净值: 5 000.00  可用保证金: 5 000.00
                    </td>
                  </tr>
                </tbody>
              </Orders>
            </Sheet>
            <Tabs>
              <Tab $on>交易</Tab>
              <Tab>账户历史</Tab>
              <Tab>警报</Tab>
              <Tab>邮箱</Tab>
              <Tab>日志</Tab>
            </Tabs>
          </Trade>
          <LangBar>
            <DragDots />
            <LangName>CH</LangName>
            <button><b>中</b></button>
            <button aria-label="半角">
              <svg width="14" height="14"><path d="M8 1c6 4 5 11-2 12-3 0-4-1-5-3 5 1 8-2 7-9z" fill="#fffbe0" /></svg>
            </button>
            <button aria-label="标点">
              <svg width="14" height="14" fill="none"><circle cx="4" cy="4" r="2.500" stroke="#fff" strokeWidth="2" /><path d="M12 8c1 2 0 4-2 5M10.500 8.500h2v2h-2z" stroke="#fff" strokeWidth="1.500" /></svg>
            </button>
            <button aria-label="软键盘">
              <svg width="15" height="13" fill="none"><rect x=".5" y="1.500" width="14" height="10" stroke="#fff" /><path d="M2 4.500h11M2 6.500h7M2 9.500h11" stroke="#fff" /></svg>
            </button>
            <button aria-label="用户">
              <svg width="12" height="16"><circle cx="6" cy="3" r="2.500" fill="#eee" /><path d="M2 6h8v4H9v5H3v-5H2z" fill="#ccc" stroke="#888" strokeWidth=".5" /></svg>
            </button>
            <button aria-label="设置">
              <svg width="15" height="15" fill="none"><path d="M2 13l6-6" stroke="#fff" strokeWidth="3" strokeLinecap="round" /><path d="M13.500 3.500A3.500 3.500 0 1 1 10 1" stroke="#fff" strokeWidth="2.500" /></svg>
            </button>
            <button aria-label="选项">
              <svg width="6" height="14"><path d="M0 1h5v2H0zM0 10h6l-3 3z" fill="#fff" /></svg>
            </button>
          </LangBar>
        </Terminal>
        <Status>
          <Cell $w={463}>寻求帮助,请按F1键</Cell>
          <Cell $w={135}>Default</Cell>
          <Cell $w={117} />
          <Cell $w={82} />
          <Cell $w={80} />
          <Cell $w={79} />
          <Cell $w={79} />
          <Cell $w={79} />
          <Traffic>
            <svg width="24" height="13" aria-hidden="true">
              {[0, 1, 2, 3, 4, 5, 6, 7].map((i) => (
                <g key={i}>
                  <rect x={i * 3} y="0" width="2" height={9 - i} fill="#5f7d0c" />
                  <rect x={i * 3} y={10 - i} width="2" height={3 + i} fill="#0d4560" />
                </g>
              ))}
            </svg>
            <span>11/0 kb</span>
            <svg width="15" height="15" aria-hidden="true">
              <path d="M1 15L15 1M5 15L15 5M9 15l6-6M13 15l2-2" stroke="#9a9a9a" />
            </svg>
          </Traffic>
        </Status>
      </Client>
    </Frame>
  );
}
